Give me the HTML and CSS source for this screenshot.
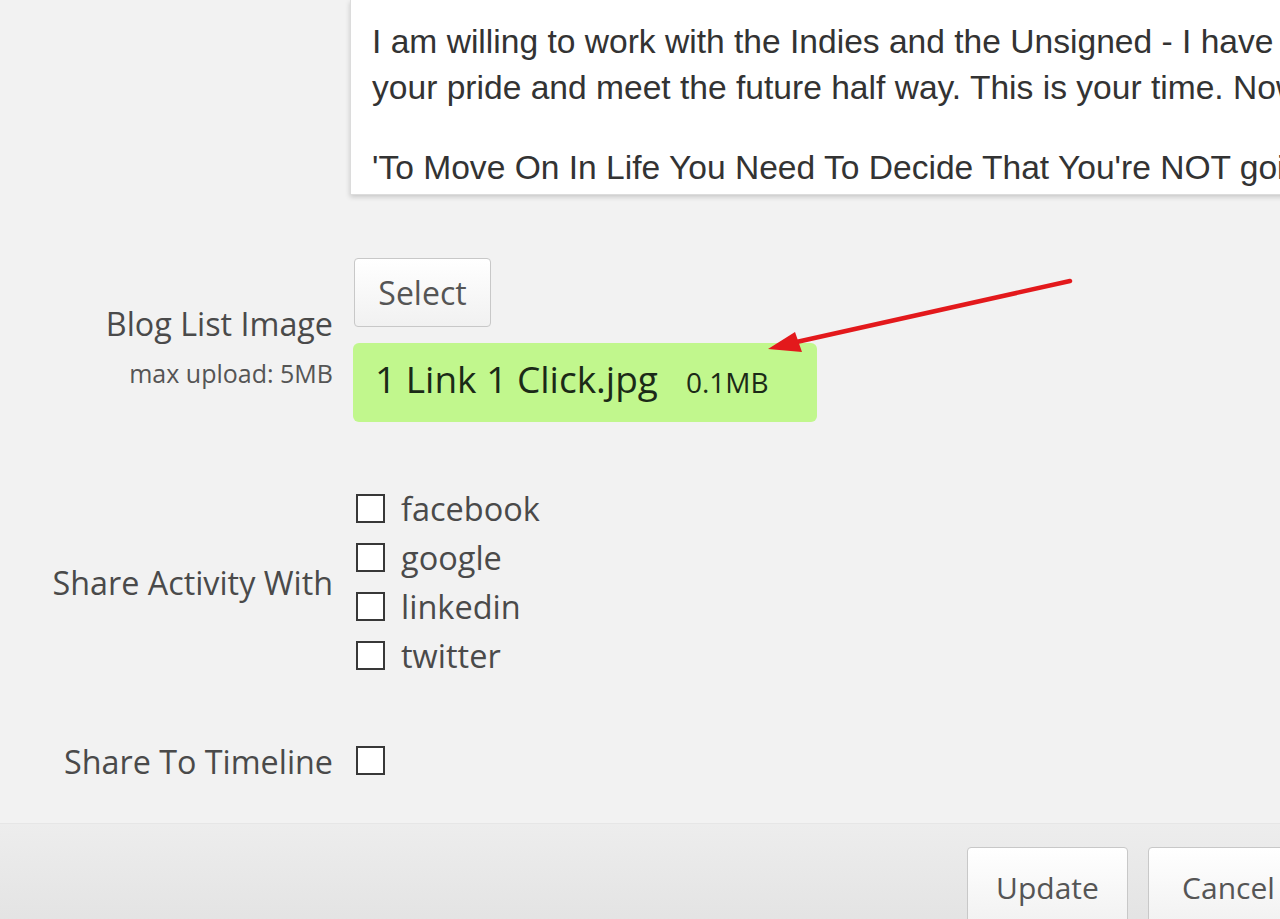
FILE: index.html
```html
<!DOCTYPE html>
<html lang="en">
<head>
<meta charset="utf-8">
<title>Edit Blog Post</title>
<link rel="stylesheet" href="styles.css">
</head>
<body>
<div class="page">
  <div class="editor">
    <p>I am willing to work with the Indies and the Unsigned - I have the tools and the reach, so swallow<br>your pride and meet the future half way. This is your time. Now is the time to make it happen.</p>
    <p>'To Move On In Life You Need To Decide That You're NOT going back to where you were.'</p>
  </div>

  <div class="form">
    <div class="row row-image">
      <div class="label">
        <div class="label-main">Blog List Image</div>
        <div class="label-sub">max upload: 5MB</div>
      </div>
      <div class="field">
        <button class="btn btn-select" type="button">Select</button>
        <div class="file">
          <div class="file-text"><span class="file-name">1 Link 1 Click.jpg</span><span class="file-size">0.1MB</span></div>
        </div>
      </div>
    </div>

    <div class="row row-share">
      <div class="label label-center">Share Activity With</div>
      <div class="field checks">
        <label class="check"><input type="checkbox"><span>facebook</span></label>
        <label class="check"><input type="checkbox"><span>google</span></label>
        <label class="check"><input type="checkbox"><span>linkedin</span></label>
        <label class="check"><input type="checkbox"><span>twitter</span></label>
      </div>
    </div>

    <div class="row row-timeline">
      <div class="label label-center">Share To Timeline</div>
      <div class="field checks">
        <label class="check"><input type="checkbox"></label>
      </div>
    </div>
  </div>

  <div class="footer">
    <div class="actions">
      <button class="btn btn-action" type="button">Update</button>
      <button class="btn btn-action" type="button">Cancel</button>
    </div>
  </div>

  <svg class="arrow" width="1280" height="919" viewBox="0 0 1280 919" aria-hidden="true">
    <line x1="1070" y1="281" x2="792" y2="343" stroke="#e3191c" stroke-width="4.5" stroke-linecap="round"/>
    <polygon points="768,349 795,332 802,352" fill="#e3191c"/>
  </svg>
</div>
</body>
</html>
```

FILE: styles.css
```css
* { box-sizing: border-box; }

html, body {
  margin: 0;
  padding: 0;
  background: #f2f2f2;
}

.page {
  position: relative;
  height: 919px;
  overflow: hidden;
  display: flex;
  flex-direction: column;
  font-family: "Open Sans", "Noto Sans", sans-serif;
  color: #4a4a4a;
}

.editor {
  flex: none;
  margin-left: 350px;
  width: 960px;
  background: #fff;
  border: 1px solid #dcdcdc;
  border-top: none;
  box-shadow: 0 2px 5px rgba(0, 0, 0, 0.18);
  padding: 19px 0 3px 21px;
  font-family: "Liberation Sans", Arial, sans-serif;
  font-size: 33.6px;
  line-height: 46px;
  color: #333;
  white-space: nowrap;
  overflow: hidden;
}

.editor p { margin: 0; }
.editor p + p { margin-top: 34px; }

.form {
  flex: none;
  display: flex;
  flex-direction: column;
}

.row {
  display: grid;
  grid-template-columns: 333px 1fr;
  column-gap: 20px;
}

.row-image { margin-top: 63px; }
.row-share { margin-top: 62px; }
.row-timeline { margin-top: 56px; }

.label {
  text-align: right;
  font-size: 32.3px;
  color: #4a4a4a;
}

.row-image .label { padding-top: 45px; }

.label-main { line-height: 40px; }

.label-sub {
  margin-top: 15px;
  font-size: 25px;
  line-height: 30px;
  color: #555;
}

.label-center {
  align-self: center;
  line-height: 40px;
}

.field {
  display: flex;
  flex-direction: column;
  align-items: flex-start;
}

.btn {
  font-family: "Open Sans", "Noto Sans", sans-serif;
  color: #555;
  background: linear-gradient(#ffffff, #f1f1f1);
  border: 1px solid #c8c8c8;
  border-radius: 4px;
  padding: 0;
  cursor: pointer;
}

.btn-select {
  margin-left: 1px;
  width: 137px;
  height: 69px;
  font-size: 32px;
}

.file {
  margin-top: 16px;
  width: 464px;
  height: 79px;
  background: #c1f78d;
  border-radius: 6px;
  padding-left: 22px;
  display: flex;
  align-items: center;
  color: #1b2a17;
}

.file-text { line-height: 50px; }

.file-name { font-size: 37px; }

.file-size {
  margin-left: 28px;
  font-size: 28px;
}

.checks { padding-left: 3px; }

.check {
  height: 49px;
  display: flex;
  align-items: center;
  gap: 16px;
  font-size: 32.5px;
  color: #4a4a4a;
}

.check input {
  appearance: none;
  -webkit-appearance: none;
  margin: 0;
  width: 29px;
  height: 29px;
  background: #fff;
  border: 2px solid #383838;
  border-radius: 0;
}

.footer {
  margin-top: 38px;
  flex: 1;
  background: linear-gradient(#ededed, #e3e3e3);
  border-top: 1px solid #e6e6e6;
  padding-top: 23px;
}

.actions {
  display: flex;
  gap: 20px;
  margin-left: 967px;
}

.btn-action {
  flex: none;
  width: 161px;
  height: 80px;
  font-size: 30px;
}

.arrow {
  position: absolute;
  left: 0;
  top: 0;
  pointer-events: none;
}
```
